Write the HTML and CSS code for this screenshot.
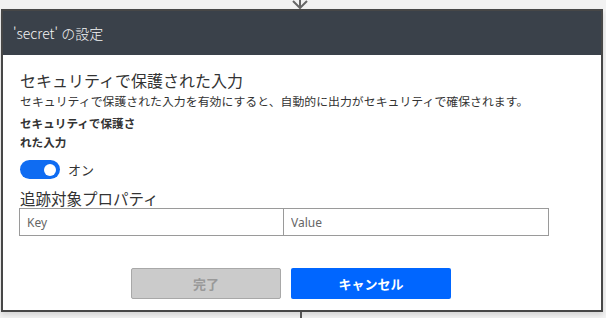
FILE: index.html
```html
<!DOCTYPE html>
<html lang="ja">
<head>
    <meta charset="UTF-8">
    <meta name="viewport" content="width=device-width, initial-scale=1.0">
    <title>'secret' の設定</title>
    <link rel="stylesheet" href="styles.css">
</head>
<body>

<div class="link-top">
    <svg width="18" height="9" viewBox="0 0 18 9">
        <path d="M9 -4 L9 8 M2 1 L9 8 L16 1" fill="none" stroke="#666" stroke-width="2"/>
    </svg>
</div>

<div class="card">
    <div class="card-header">'secret' の設定</div>

    <div class="card-body">
        <div class="section-title">セキュリティで保護された入力</div>
        <div class="section-desc">セキュリティで保護された入力を有効にすると、自動的に出力がセキュリティで確保されます。</div>
        <div class="field-label">セキュリティで保護された入力</div>

        <div class="toggle-row">
            <span class="toggle"><span class="knob"></span></span>
            <span class="toggle-text">オン</span>
        </div>

        <div class="prop-title">追跡対象プロパティ</div>
        <div class="prop-inputs">
            <input class="prop-input" type="text" placeholder="Key">
            <input class="prop-input value" type="text" placeholder="Value">
        </div>
    </div>

    <div class="card-footer">
        <button class="btn btn-done">完了</button>
        <button class="btn btn-cancel">キャンセル</button>
    </div>
</div>

<div class="link-bottom">
    <span class="link-line"></span>
</div>

</body>
</html>
```

FILE: styles.css
```css
body {
    font-family: "Noto Sans CJK JP", "Noto Sans", sans-serif;
    margin: 0;
    padding: 0;
    background-color: #f2f2f2;
    color: #333;
    overflow: hidden;
}

/* conectores arriba y abajo */
.link-top {
    height: 9px;
    padding-left: 291px;
    line-height: 0;
}
.link-bottom {
    height: 6px;
    padding-left: 300px;
}
.link-line {
    display: block;
    width: 2px;
    height: 6px;
    background-color: #555;
}

.card {
    box-sizing: border-box;
    width: 602px;
    margin-left: 1px;
    border: 2px solid #474747;
    background-color: #fff;
    box-shadow: 0 3px 5px rgba(0, 0, 0, 0.12);
}
.card-header {
    height: 44px;
    line-height: 44px;
    padding-left: 10px;
    background-color: #3a414a;
    color: #f4f4f4;
    font-size: 14px;
    font-weight: 300;
}

.card-body {
    padding: 15px 17px 0;
}
.section-title {
    font-size: 16px;
    line-height: 20px;
}
.section-desc {
    margin-top: 3px;
    font-size: 11.9px;
    line-height: 16px;
}
.field-label {
    width: 122px;
    margin-top: 5px;
    font-size: 11.6px;
    font-weight: bold;
    line-height: 19px;
}

.toggle-row {
    display: flex;
    align-items: center;
    margin-top: 8px;
    height: 19px;
}
.toggle {
    display: flex;
    align-items: center;
    justify-content: flex-end;
    box-sizing: border-box;
    width: 40px;
    height: 19px;
    padding-right: 4px;
    border-radius: 10px;
    background-color: #0f6cf2;
}
.knob {
    width: 12px;
    height: 12px;
    border-radius: 50%;
    background-color: #fff;
}
.toggle-text {
    margin-left: 8px;
    font-size: 13px;
}

.prop-title {
    margin-top: 10px;
    font-size: 15.5px;
    line-height: 18px;
}
.prop-inputs {
    display: flex;
    margin-top: 1px;
    margin-left: -1px;
    width: 530px;
}
.prop-input {
    box-sizing: border-box;
    width: 265px;
    height: 28px;
    margin: 0;
    padding: 0 7px;
    border: 1px solid #9a9a9a;
    border-radius: 0;
    font-family: "Noto Sans", sans-serif;
    font-size: 12px;
    color: #333;
    outline: none;
}
.prop-input.value {
    border-left: none;
}
.prop-input::placeholder {
    color: #666;
}

.card-footer {
    display: flex;
    gap: 10px;
    padding: 32px 0 11px 128px;
}
.btn {
    height: 31px;
    border-radius: 2px;
    font-family: "Noto Sans CJK JP", sans-serif;
    font-size: 13px;
    font-weight: bold;
    cursor: pointer;
}
.btn-done {
    width: 150px;
    background-color: #cbcbcb;
    border: 1px solid #a8a8a8;
    color: #999;
}
.btn-cancel {
    width: 160px;
    background-color: #0066ff;
    border: none;
    color: #fff;
}
```
